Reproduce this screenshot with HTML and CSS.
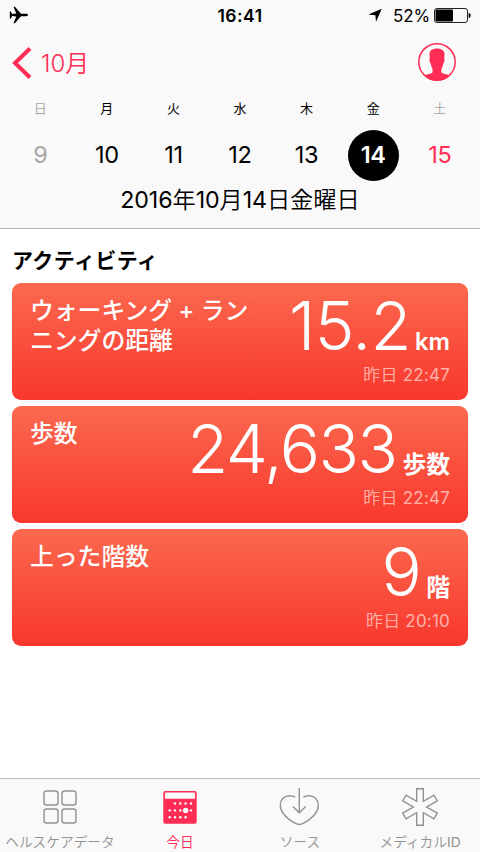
FILE: index.html
```html
<!DOCTYPE html>
<html lang="ja">
<head>
    <meta charset="UTF-8">
    <meta name="viewport" content="width=device-width, initial-scale=1.0">
    <title>ヘルスケア</title>
    <link rel="stylesheet" href="styles.css">
</head>
<body>
    <header class="header">
        <div class="status-bar">
            <div class="status-left">
                <svg width="20" height="18" viewBox="0 0 20 18">
                    <path d="M19 9c0-.7-.8-1.200-2-1.200h-5L5.900.8H4.500L7.300 7.600 3 8 2 5.500H.8V12.500H2L3 10l4.300.4L4.500 17.200H5.900L12 10.200h5c1.200 0 2-.5 2-1.200z"/>
                </svg>
            </div>
            <div class="clock">16:41</div>
            <div class="status-right">
                <svg width="14" height="14" viewBox="0 0 14 14">
                    <path d="M13.800.7 8 13.800 7.400 7.200.3 6.500z"/>
                </svg>
                <span class="percent">52%</span>
                <svg width="37" height="15" viewBox="0 0 37 15">
                    <rect x=".5" y=".5" width="33" height="14" rx="2.500" fill="none" stroke="#222"/>
                    <rect x="1.500" y="1.500" width="17.500" height="12" rx="1"/>
                    <path d="M34.700 5c1.300.2 2 1.300 2 2.500s-.7 2.300-2 2.500z"/>
                </svg>
            </div>
        </div>

        <div class="nav-bar">
            <a class="back">
                <svg width="20" height="32" viewBox="0 0 20 32">
                    <path d="M18 1.500 3 16l15 14.500" fill="none" stroke="#ff2d55" stroke-width="4"/>
                </svg>
                <span><b>10</b>月</span>
            </a>
            <svg class="profile" width="38" height="38" viewBox="0 0 38 38">
                <circle cx="19" cy="19" r="18.200" fill="none" stroke="#ff2d55" stroke-width="1.500"/>
                <path d="M19 5.600c-5 0-7.600 2.200-7.500 6 0 1.400.2 2.800.3 4.200-.8.500-.1 4 1 4.800.4 2.500 1 4.100 1.700 5.300.2 1.700.2 3.100-.2 3.900-1.200 1.100-4.900 1.400-8 2.600C9.500 35.500 14 37.600 19 37.600s9.500-2.100 12.700-5.200c-3.100-1.200-6.800-1.500-8-2.600-.4-.8-.4-2.200-.2-3.900.7-1.200 1.300-2.800 1.700-5.300 1.100-.8 1.800-4.300 1-4.800.1-1.400.3-2.800.3-4.200.1-3.800-2.500-6-7.500-6z" fill="#ff2d55"/>
            </svg>
        </div>

        <div class="week">
            <div class="day muted"><span class="name">日</span><span class="num">9</span></div>
            <div class="day"><span class="name">月</span><span class="num">10</span></div>
            <div class="day"><span class="name">火</span><span class="num">11</span></div>
            <div class="day"><span class="name">水</span><span class="num">12</span></div>
            <div class="day"><span class="name">木</span><span class="num">13</span></div>
            <div class="day selected"><span class="name">金</span><span class="num">14</span></div>
            <div class="day muted today"><span class="name">土</span><span class="num">15</span></div>
        </div>
        <div class="full-date"><b>2016</b>年<b>10</b>月<b>14</b>日金曜日</div>
    </header>

    <main class="content">
        <h2>アクティビティ</h2>

        <div class="card">
            <div class="title">ウォーキング + ラン<br>ニングの距離</div>
            <div class="data">
                <div class="value"><span class="number decimal">15.2</span><span class="unit latin">km</span></div>
                <div class="time">昨日 <b>22:47</b></div>
            </div>
        </div>

        <div class="card">
            <div class="title">歩数</div>
            <div class="data">
                <div class="value"><span class="number">24,633</span><span class="unit">歩数</span></div>
                <div class="time">昨日 <b>22:47</b></div>
            </div>
        </div>

        <div class="card">
            <div class="title">上った階数</div>
            <div class="data">
                <div class="value"><span class="number">9</span><span class="unit">階</span></div>
                <div class="time">昨日 <b>20:10</b></div>
            </div>
        </div>
    </main>

    <nav class="tab-bar">
        <a class="tab">
            <svg width="40" height="40" viewBox="0 0 40 40" fill="none" stroke="#929292" stroke-width="1.400">
                <rect x="4" y="4" width="14" height="14" rx="2.500"/>
                <rect x="22" y="4" width="14" height="14" rx="2.500"/>
                <rect x="4" y="22" width="14" height="14" rx="2.500"/>
                <rect x="22" y="22" width="14" height="14" rx="2.500"/>
            </svg>
            <span>ヘルスケアデータ</span>
        </a>
        <a class="tab active">
            <svg width="40" height="40" viewBox="0 0 40 40">
                <rect x="3.300" y="4" width="33.400" height="32.700" rx="2" fill="#ff2d55"/>
                <path d="M5 11.800V6.500a1 1 0 0 1 1-1h28a1 1 0 0 1 1 1v5.300z" fill="#f9f9f9"/>
                <g fill="#fff">
                    <circle cx="15" cy="16.500" r="1.200"/>
                    <circle cx="20.300" cy="16.500" r="1.200"/>
                    <circle cx="25.600" cy="16.500" r="1.200"/>
                    <circle cx="31" cy="16.500" r="1.200"/>
                    <circle cx="9.700" cy="23.400" r="1.200"/>
                    <circle cx="15" cy="23.400" r="1.200"/>
                    <circle cx="20.300" cy="23.400" r="1.200"/>
                    <circle cx="25.600" cy="23.400" r="2.700"/>
                    <circle cx="31" cy="23.400" r="1.200"/>
                    <circle cx="9.700" cy="30.200" r="1.200"/>
                    <circle cx="15" cy="30.200" r="1.200"/>
                    <circle cx="20.300" cy="30.200" r="1.200"/>
                    <circle cx="25.600" cy="30.200" r="1.200"/>
                </g>
            </svg>
            <span>今日</span>
        </a>
        <a class="tab">
            <svg width="40" height="40" viewBox="0 0 40 40" fill="none" stroke="#929292" stroke-width="1.400">
                <path d="M15.200 10.200C13.500 9.200 11.800 8.700 9.700 8.700 4.300 8.700.3 12.600.3 18.200c0 8.300 8 14.300 15.200 18.200 2.700 1.500 4.900 1.500 7.600 0C30.300 32.500 38.300 26.500 38.300 18.200 38.300 12.600 34.300 8.700 28.900 8.700c-2.100 0-3.800.5-5.500 1.500"/>
                <path d="M19.300 1v24.500M12.900 19.500l6.400 6.300 6.400-6.300"/>
            </svg>
            <span>ソース</span>
        </a>
        <a class="tab">
            <svg width="40" height="40" viewBox="0 0 40 40" fill="none" stroke="#929292" stroke-width="1.400">
                <path d="M16.700 1.800h6.600v12.500l10.700-6.200 3.300 5.800L26.600 20l10.700 6.100-3.300 5.800-10.700-6.200v12.500h-6.600V25.700L6 31.900l-3.300-5.800L13.400 20 2.700 13.900 6 8.100l10.700 6.200z"/>
            </svg>
            <span>メディカル<b>ID</b></span>
        </a>
    </nav>
</body>
</html>
```
FILE: styles.css
```css
* {
    box-sizing: border-box;
}
body {
    font-family: Inter, "Noto Sans CJK JP", sans-serif;
    margin: 0;
    height: 852px;
    display: flex;
    flex-direction: column;
    background-color: #fff;
    color: #000;
    overflow: hidden;
}
svg {
    display: block;
    flex-shrink: 0;
    overflow: visible;
}
b {
    font-weight: 400;
}
.header {
    height: 229px;
    background-color: #f9f9f9;
    border-bottom: 1px solid #b9b9bb;
}
.status-bar {
    display: flex;
    align-items: center;
    height: 30px;
    padding: 0 9px 0 9px;
}
.status-left, .status-right {
    flex: 1;
    display: flex;
    align-items: center;
}
.status-right {
    justify-content: flex-end;
}
.clock {
    font-size: 17.5px;
    font-weight: 600;
    letter-spacing: 0.5px;
}
.percent {
    font-size: 17px;
    margin: 1px 4px 0 11px;
    letter-spacing: -0.1px;
}
.nav-bar {
    display: flex;
    align-items: center;
    justify-content: space-between;
    height: 65px;
    padding: 0 24px 0 12px;
}
.profile {
    margin-bottom: 1px;
}
.back {
    display: flex;
    align-items: center;
    gap: 9px;
    color: #ff2d55;
    font-size: 24px;
    font-weight: 350;
    line-height: 32px;
}
.back b {
    font-weight: 350;
}
.back span {
    padding-top: 2px;
}
.week {
    display: flex;
    padding: 0 7px;
}
.day {
    flex: 1;
    display: flex;
    flex-direction: column;
    align-items: center;
}
.name {
    font-size: 13px;
    line-height: 20px;
    margin-top: 3px;
}
.num {
    width: 51px;
    height: 51px;
    margin-top: 12px;
    border-radius: 50%;
    font-size: 23.5px;
    line-height: 50px;
    letter-spacing: -0.3px;
    text-align: center;
}
.muted {
    color: #a5a5a5;
}
.muted .name {
    font-weight: 350;
}
.today .num {
    color: #ff2d55;
}
.selected .num {
    background-color: #000;
    color: #fff;
    font-weight: 600;
}
.full-date {
    font-size: 23.2px;
    font-weight: 350;
    line-height: 39px;
    text-align: center;
}
.full-date b {
    letter-spacing: -0.1px;
}
.content {
    flex: 1;
    padding: 0 12px;
}
h2 {
    margin: 0;
    padding-top: 9px;
    height: 54px;
    font-size: 21px;
    font-weight: 700;
    line-height: 46px;
    letter-spacing: 0.4px;
}
.card {
    display: flex;
    justify-content: space-between;
    height: 117px;
    margin-bottom: 6px;
    padding: 12px 18px 0;
    border-radius: 9px;
    background: linear-gradient(#fb694f, #f8372d);
    color: #fff;
}
.title {
    padding-top: 1px;
    font-size: 23.8px;
    font-weight: 500;
    line-height: 30px;
    white-space: nowrap;
}
.data {
    text-align: right;
}
.value {
    display: flex;
    align-items: baseline;
    justify-content: flex-end;
    height: 67px;
    padding-top: 1px;
    line-height: 60px;
}
.number {
    font-size: 67px;
    font-weight: 300;
    letter-spacing: -1.6px;
}
.decimal {
    letter-spacing: -0.6px;
}
.unit {
    margin-left: 6px;
    font-size: 23.8px;
    font-weight: 700;
}
.latin {
    margin-left: 4px;
    font-weight: 600;
}
.time {
    font-size: 17px;
    font-weight: 350;
    line-height: 26px;
    letter-spacing: 0.2px;
    color: #ffb3a9;
}
.tab-bar {
    display: flex;
    height: 74px;
    border-top: 1px solid #bdbdbf;
    background-color: #f9f9f9;
}
.tab {
    flex: 1;
    display: flex;
    flex-direction: column;
    align-items: center;
    padding-top: 8px;
    color: #929292;
    font-size: 13.7px;
    font-weight: 350;
    line-height: 20px;
    white-space: nowrap;
}
.tab span {
    margin-top: 5px;
}
.tab.active {
    color: #ff2d55;
}
```
